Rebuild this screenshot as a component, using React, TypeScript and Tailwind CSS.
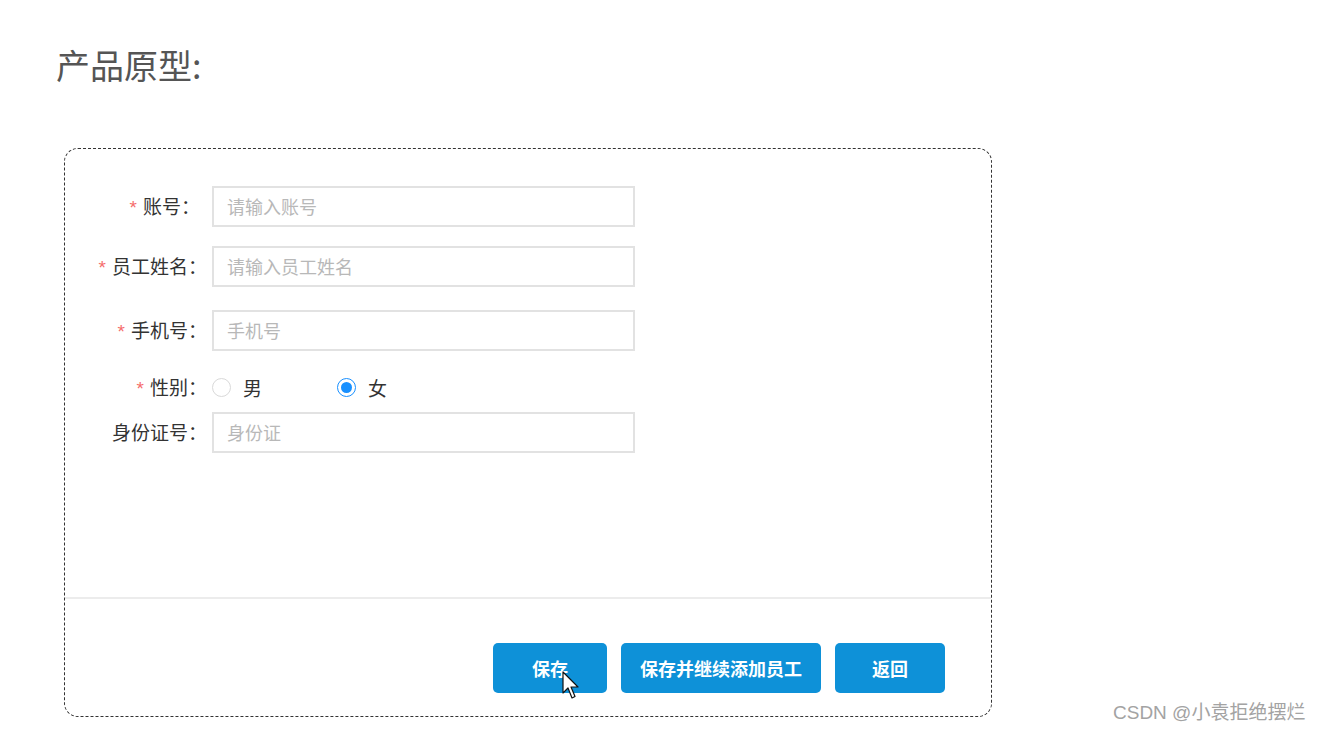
const font = { fontFamily: '"Microsoft YaHei", "Noto Sans CJK SC", "Noto Sans", sans-serif' };

type LabelProps = { label: string; required?: boolean; pad?: string };
type FieldProps = LabelProps & { placeholder: string; className?: string };

const Label = ({ label, required, pad }: LabelProps) => (
  <label className={`flex w-[147px] shrink-0 items-center justify-end text-[19px] text-[#333] ${pad ?? "pr-[5px]"}`}>
    {required && (
      <span
        className="mr-[6px] mt-[2px] text-[19px] leading-none text-[#f56c6c]"
        style={{ fontFamily: '"Liberation Sans", sans-serif' }}
      >
        *
      </span>
    )}
    {label}：
  </label>
);

const Field = ({ label, required, pad, placeholder, className }: FieldProps) => (
  <div className={`flex items-center ${className ?? ""}`}>
    <Label label={label} required={required} pad={pad} />
    <div className="flex h-[41px] w-[423px] items-center border-2 border-[#e2e2e2] bg-white px-[13px] text-[18px] text-[#b8b8b8]">
      {placeholder}
    </div>
  </div>
);

const Radio = ({ checked, label }: { checked?: boolean; label: string }) => (
  <div className="flex items-center">
    {checked ? (
      <span className="flex h-[19px] w-[19px] items-center justify-center rounded-full border-[1.5px] border-[#1890ff]">
        <span className="h-[11px] w-[11px] rounded-full bg-[#1890ff]" />
      </span>
    ) : (
      <span className="h-[19px] w-[19px] rounded-full border-[1.5px] border-[#d9d9d9]" />
    )}
    <span className="ml-[12px] mt-[3px] text-[19px] text-[#333]">{label}</span>
  </div>
);

export default function App() {
  return (
    <div className="relative h-[731px] w-[1319px] overflow-hidden bg-white" style={font}>
      <div className="pl-[56px] pt-[40px]">
        <h1 className="h-[50px] text-[34px] leading-[50px] font-normal text-[#555]">产品原型:</h1>
        <div className="ml-[8px] mt-[58px] flex h-[569px] w-[928px] flex-col rounded-[14px] border border-dashed border-[#333]">
          <div className="flex flex-1 flex-col pt-[37px]">
            <Field label="账号" required pad="pr-[12px]" placeholder="请输入账号" />
            <Field label="员工姓名" required placeholder="请输入员工姓名" className="mt-[19px]" />
            <Field label="手机号" required placeholder="手机号" className="mt-[23px]" />
            <div className="mt-[24px] flex h-[24px] items-center">
              <Label label="性别" required />
              <div className="flex items-center gap-[75px]">
                <Radio label="男" />
                <Radio checked label="女" />
              </div>
            </div>
            <Field label="身份证号" placeholder="身份证" className="mt-[13px]" />
          </div>
          <div className="h-[2px] bg-[#ececec]" />
          <div className="flex h-[117px] justify-end gap-[14px] pr-[46px] pt-[44px]">
            <button className="h-[50px] w-[114px] rounded-[5px] bg-[#0e91d8] text-[18px] font-bold text-white">保存</button>
            <button className="h-[50px] w-[200px] rounded-[5px] bg-[#0e91d8] text-[18px] font-bold text-white">保存并继续添加员工</button>
            <button className="h-[50px] w-[110px] rounded-[5px] bg-[#0e91d8] text-[18px] font-bold text-white">返回</button>
          </div>
        </div>
      </div>
      <svg className="absolute left-[562px] top-[671px]" width="20" height="30" viewBox="0 0 20 30">
        <path d="M1 1 L1 22 L6 17 L10 27 L13 25.5 L9 16 L16 16 Z" fill="#fff" stroke="#111" strokeWidth="1.2" strokeLinejoin="round" />
      </svg>
      <div
        className="absolute left-[1113px] top-[699px] text-[19px] text-[#a3a3a3]"
        style={{ fontFamily: '"Liberation Sans", "Noto Sans CJK SC", sans-serif' }}
      >
        CSDN @小袁拒绝摆烂
      </div>
    </div>
  );
}
